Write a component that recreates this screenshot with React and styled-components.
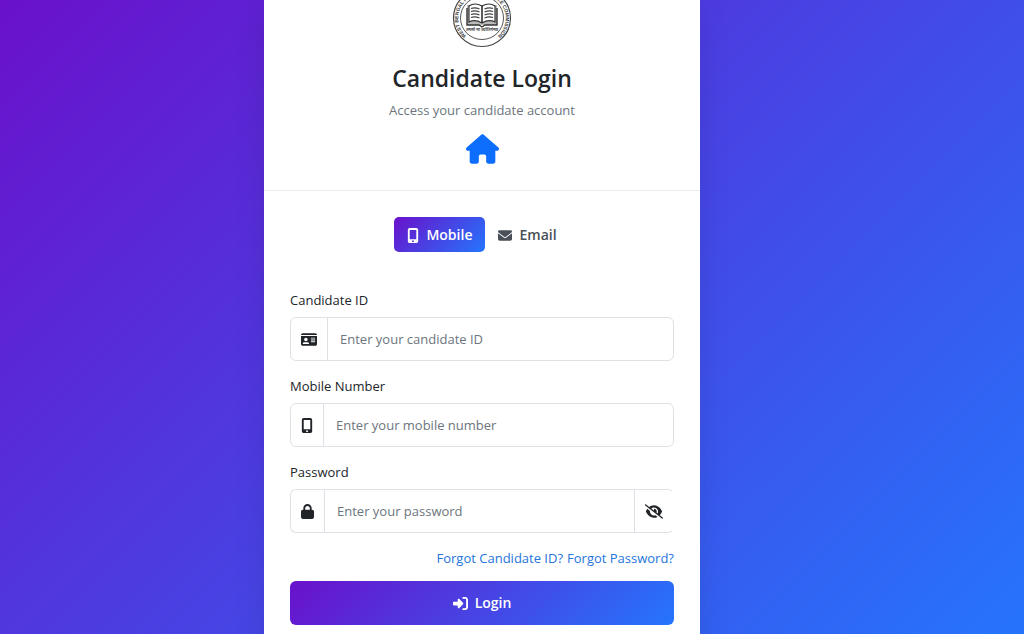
import React, { useState } from "react";
import styled, { createGlobalStyle, css } from "styled-components";
import {
  FaEnvelope,
  FaEye,
  FaEyeSlash,
  FaHouse,
  FaIdCard,
  FaLock,
  FaMobileScreenButton,
  FaRightToBracket,
} from "react-icons/fa6";

const gradient = "linear-gradient(135deg, #6a11cb 0%, #2575fc 100%)";

const GlobalStyle = createGlobalStyle`
  * {
    box-sizing: border-box;
  }
  body {
    margin: 0;
    font-family: "Open Sans", "Noto Sans", sans-serif;
    font-size: 13px;
    line-height: 20px;
    color: #212529;
  }
  button,
  input {
    font: inherit;
  }
`;

const StyledPage = styled.div`
  display: flex;
  justify-content: center;
  min-height: 100vh;
  padding-right: 60px;
  background: ${gradient};
  @media all and (max-width: 768px) {
    padding-right: 0;
  }
`;

const StyledCard = styled.main`
  width: 100%;
  max-width: 436px;
  background-color: white;
  box-shadow: 0 10px 30px rgba(0, 0, 0, 0.1);
`;

const StyledHeader = styled.header`
  display: flex;
  flex-direction: column;
  align-items: center;
  padding-bottom: 26px;
  border-bottom: 1px solid #e9ecef;
  text-align: center;
  & .logo {
    display: block;
  }
  & h1 {
    margin: 15px 0 7px;
    font-size: 23px;
    line-height: 30px;
    font-weight: 600;
  }
  & p {
    margin: 0;
    color: #6c757d;
  }
`;

const HomeLink = styled.a`
  display: flex;
  margin-top: 14px;
  color: #0d6efd;
  & svg {
    width: 33px;
    height: 30px;
  }
`;

const Form = styled.form`
  padding: 26px;
`;

const Tabs = styled.div`
  display: flex;
  justify-content: center;
  margin-bottom: 38px;
`;

const Tab = styled.button`
  display: flex;
  align-items: center;
  gap: 7px;
  padding: 8px 13px 7px;
  border: 0;
  border-radius: 5px;
  background: transparent;
  color: #495057;
  font-size: 14px;
  font-weight: 600;
  cursor: pointer;
  ${({ $active }) =>
    $active &&
    css`
      background: ${gradient};
      color: white;
    `}
`;

const StyledIcon = styled.span`
  display: flex;
  width: ${({ $width }) => $width}px;
  & svg {
    width: 100%;
    height: 15px;
  }
`;

const StyledField = styled.div`
  margin-bottom: 15px;
  & label {
    display: block;
    margin-bottom: 7px;
  }
`;

const InputGroup = styled.div`
  display: flex;
  height: 44px;
  border: 1px solid #dee2e6;
  border-radius: 6px;
  ${({ $openEnd }) => $openEnd && "border-right-color: transparent;"}
  & .prefix {
    display: flex;
    align-items: center;
    padding: 0 10px;
    border-right: 1px solid #dee2e6;
  }
  & input {
    flex: 1;
    min-width: 0;
    padding: 0 12px;
    border: 0;
    border-radius: 6px;
    outline: none;
    background: transparent;
    color: #212529;
    &::placeholder {
      color: #6c757d;
      opacity: 1;
    }
  }
`;

const ToggleButton = styled.button`
  display: flex;
  align-items: center;
  padding: 0 10px;
  border: 0;
  border-left: 1px solid #dee2e6;
  background: transparent;
  color: #212529;
  cursor: pointer;
`;

const Links = styled.div`
  display: flex;
  justify-content: flex-end;
  gap: 4px;
  margin-bottom: 13px;
  & a {
    color: #2575dc;
    text-decoration: none;
  }
`;

const LoginButton = styled.button`
  display: flex;
  align-items: center;
  justify-content: center;
  gap: 7px;
  width: 100%;
  height: 44px;
  border: 0;
  border-radius: 6px;
  background: ${gradient};
  color: white;
  font-size: 14px;
  font-weight: 600;
  cursor: pointer;
`;

const Icon = ({ glyph: Glyph, width }) => (
  <StyledIcon $width={width} aria-hidden>
    <Glyph />
  </StyledIcon>
);

const Logo = () => (
  <svg
    className="logo"
    width="60"
    height="48"
    viewBox="0 12 60 48"
    role="img"
    aria-label="West Bengal Public Service Commission"
  >
    <g fill="none" stroke="#444">
      <circle cx="30" cy="30" r="28.5" strokeWidth="1.2" />
      <circle cx="30" cy="30" r="21.5" strokeWidth="0.9" />
    </g>
    <path id="ring" d="M20.6 52 A23.7 23.7 0 1 1 39.4 52" fill="none" />
    <text
      fontFamily="Liberation Sans, sans-serif"
      fontSize="5"
      fontWeight="700"
      textAnchor="middle"
      fill="#333"
    >
      <textPath href="#ring" startOffset="50%">
        WEST BENGAL PUBLIC SERVICE COMMISSION
      </textPath>
    </text>
    <rect x="15" y="17" width="30" height="20" fill="#bbb" />
    <path
      d="M17 18 Q23 14 30 18 Q37 14 43 18 V34 Q37 31 30 35 Q23 31 17 34 Z"
      fill="white"
      stroke="#333"
      strokeWidth="1.2"
    />
    <path d="M15 20 V37 H27 L30 39 L33 37 H45 V20" fill="none" stroke="#333" strokeWidth="1.4" />
    <path d="M30 18 V35" stroke="#222" strokeWidth="1.5" />
    <path
      d="M19 20.5 Q23 19 27.5 21 M19 23.5 Q23 22 27.5 24 M19 26.5 Q23 25 27.5 27 M19 29.5 Q23 28 27.5 30 M32.5 21 Q37 19 41 20.5 M32.5 24 Q37 22 41 23.5 M32.5 27 Q37 25 41 26.5 M32.5 30 Q37 28 41 29.5"
      fill="none"
      stroke="#444"
      strokeWidth="1.3"
    />
    <text
      x="30"
      y="43"
      textAnchor="middle"
      fontFamily="Noto Sans, sans-serif"
      fontSize="4"
      fontWeight="700"
      fill="#444"
    >
      तमसो मा ज्योतिर्गमय
    </text>
  </svg>
);

const Field = ({ id, label, icon, action, ...inputProps }) => (
  <StyledField>
    <label htmlFor={id}>{label}</label>
    <InputGroup $openEnd={Boolean(action)}>
      <span className="prefix">{icon}</span>
      <input id={id} {...inputProps} />
      {action}
    </InputGroup>
  </StyledField>
);

const App = () => {
  const [method, setMethod] = useState("mobile");
  const [showPassword, setShowPassword] = useState(false);
  const isMobile = method === "mobile";

  return (
    <StyledPage>
      <GlobalStyle />
      <StyledCard>
        <StyledHeader>
          <Logo />
          <h1>Candidate Login</h1>
          <p>Access your candidate account</p>
          <HomeLink href="#home" aria-label="Home">
            <FaHouse />
          </HomeLink>
        </StyledHeader>
        <Form onSubmit={(e) => e.preventDefault()}>
          <Tabs>
            <Tab
              type="button"
              $active={isMobile}
              aria-pressed={isMobile}
              onClick={() => setMethod("mobile")}
            >
              <Icon glyph={FaMobileScreenButton} width={12} />
              Mobile
            </Tab>
            <Tab
              type="button"
              $active={!isMobile}
              aria-pressed={!isMobile}
              onClick={() => setMethod("email")}
            >
              <Icon glyph={FaEnvelope} width={14} />
              Email
            </Tab>
          </Tabs>
          <Field
            id="candidateId"
            label="Candidate ID"
            icon={<Icon glyph={FaIdCard} width={16} />}
            type="text"
            placeholder="Enter your candidate ID"
          />
          {isMobile ? (
            <Field
              id="mobile"
              label="Mobile Number"
              icon={<Icon glyph={FaMobileScreenButton} width={12} />}
              type="tel"
              placeholder="Enter your mobile number"
            />
          ) : (
            <Field
              id="email"
              label="Email"
              icon={<Icon glyph={FaEnvelope} width={14} />}
              type="email"
              placeholder="Enter your email"
            />
          )}
          <Field
            id="password"
            label="Password"
            icon={<Icon glyph={FaLock} width={13} />}
            type={showPassword ? "text" : "password"}
            placeholder="Enter your password"
            action={
              <ToggleButton
                type="button"
                aria-label={showPassword ? "Hide password" : "Show password"}
                onClick={() => setShowPassword(!showPassword)}
              >
                <Icon glyph={showPassword ? FaEye : FaEyeSlash} width={18} />
              </ToggleButton>
            }
          />
          <Links>
            <a href="#forgot-id">Forgot Candidate ID?</a>
            <a href="#forgot-password">Forgot Password?</a>
          </Links>
          <LoginButton type="submit">
            <Icon glyph={FaRightToBracket} width={15} />
            Login
          </LoginButton>
        </Form>
      </StyledCard>
    </StyledPage>
  );
};

export default App;
